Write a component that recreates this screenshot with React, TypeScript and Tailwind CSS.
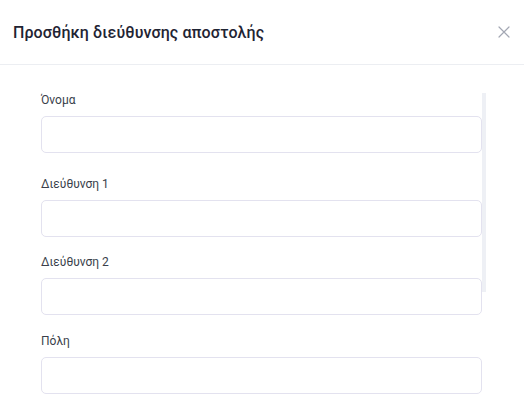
import React from "react";

const fields = [
  { label: "Όνομα", mt: "mt-[28px]" },
  { label: "Διεύθυνση 1", mt: "mt-[24px]" },
  { label: "Διεύθυνση 2", mt: "mt-[18px]" },
  { label: "Πόλη", mt: "mt-[19px]" },
];

export default function App() {
  return (
    <div className="w-[524px] h-[403px] overflow-hidden bg-white" style={{ fontFamily: "Roboto, 'Noto Sans', sans-serif" }}>
      <div className="h-[65px] flex items-center justify-between pl-[13px] pr-[14px] border-b border-[#eceef2]">
        <h2 className="text-[16px] font-medium tracking-[0.1px] text-[#1f2433] pt-[1px]" style={{ fontFamily: "Roboto, 'Noto Sans', sans-serif" }}>
          Προσθήκη διεύθυνσης αποστολής
        </h2>
        <svg width="12" height="12" viewBox="0 0 12 12" className="text-[#a3a7b3]">
          <path d="M1 1L11 11M11 1L1 11" stroke="currentColor" strokeWidth="1.2" strokeLinecap="round" />
        </svg>
      </div>
      <div className="relative flex flex-col">
        <div className="absolute left-[482px] top-[28px] w-[4px] h-[199px] bg-[#eef0f5]" />
        <div className="pl-[41px] pr-[42px] flex flex-col">
          {fields.map((f) => (
            <div key={f.label} className={f.mt}>
              <div className="text-[12px] leading-[14px] text-[#3a3f4b]">{f.label}</div>
              <div className="mt-[9px] h-[37px] rounded-[5px] border border-[#e3e2ef] bg-white" />
            </div>
          ))}
        </div>
      </div>
    </div>
  );
}
